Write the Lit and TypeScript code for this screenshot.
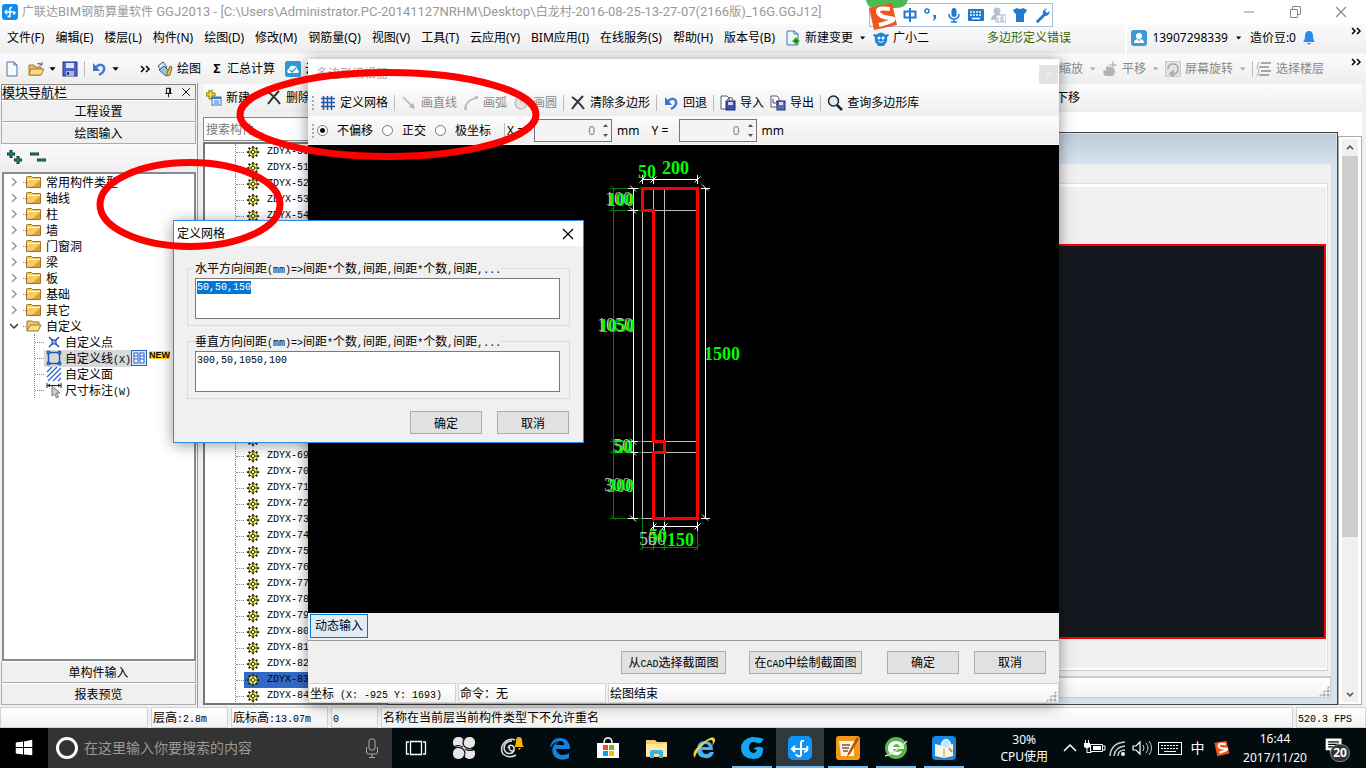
import { LitElement, html, svg, css } from "lit";
import { customElement, query } from "lit/decorators.js";
import { classMap } from "lit/directives/class-map.js";

const ICONS: Record<string, unknown> = {
  app: svg`<rect width="16" height="16" rx="3" fill="#0b8ff0"/><path d="M8 13V5q0-2 2-1.500M3 8h10M3 8l2-2M3 8l2 2M13 8q0 2-2 2M8 13q-2 0-2-1.500" fill="none" stroke="#fff" stroke-width="1.500"/>`,
  file: svg`<path d="M3 1h7l3 3v11H3z" fill="#f4f9ff" stroke="#55739c"/><path d="M10 1v3h3" fill="none" stroke="#55739c"/>`,
  open: svg`<path d="M1 4h5l1 2h6v8H1z" fill="#e9b95a" stroke="#a87a2c"/><path d="M3 8h13l-3 6H1z" fill="#ffd98a" stroke="#a87a2c"/><path d="M9 3q3-2 5 1M14 1v3h-3" fill="none" stroke="#555"/>`,
  save: svg`<rect x="1" y="1" width="14" height="14" fill="#4a62c8" stroke="#27348b"/><rect x="4" y="2" width="8" height="5" fill="#dbe6fb"/><rect x="4" y="10" width="8" height="5" fill="#a9b6d6"/><rect x="5" y="11" width="2" height="3" fill="#27348b"/>`,
  undo: svg`<path d="M4 7q6-6 9-1 1 5-5 8" fill="none" stroke="#4a7bd0" stroke-width="2.500"/><path d="M2 2v8h7z" fill="#3f72cb"/>`,
  down: svg`<path d="M4 6h7l-3.500 4z" fill="currentColor"/>`,
  pencils: svg`<path d="M1 5l5-4 4 5-5 4z" fill="#dfe9f5" stroke="#456"/><path d="M2 9l5-4 6 6-4 4z" fill="#9cc0e4" stroke="#345d8d"/><path d="M10 12l3-7 2 1-2 8-3 1z" fill="#f0c040" stroke="#7a6a20"/>`,
  cloud: svg`<rect width="16" height="16" rx="2" fill="#2e9bd8"/><path d="M3 12q-2-3 1-4 1-4 5-3 3 0 3 3 3 2 1 4z" fill="#fff"/><path d="M5 9l2 2 4-4" fill="none" stroke="#2e9bd8" stroke-width="1.500"/>`,
  add: svg`<path d="M3 0h3v3h3v3H6v3H3V6H0V3h3z" fill="#f2d33c" stroke="#8d7410"/><rect x="6" y="7" width="9" height="8" fill="#e4f0ff" stroke="#3a76c4"/><path d="M6 8h9" stroke="#3a76c4" stroke-width="2"/><path d="M8 11h5M8 13h5" stroke="#3a76c4"/>`,
  cross: svg`<path d="M2 2q6 4 12 12M13 1Q7 7 2 14" fill="none" stroke="#333" stroke-width="2"/>`,
  grid: svg`<path d="M3.500 1v14M7.500 1v14M11.500 1v14M1 3.500h14M1 7.500h14M1 11.500h14" stroke="#2457a8" stroke-width="1.500"/>`,
  line: svg`<path d="M2 2l10 10" stroke="#999" stroke-width="1.500"/><path d="M14 14l-6-2 4-4z" fill="#999"/>`,
  arc: svg`<path d="M2 14Q3 5 13 3" fill="none" stroke="#999" stroke-width="1.500"/><rect x="12" y="1" width="3" height="3" fill="#aaa"/><rect x="1" y="12" width="3" height="3" fill="#aaa"/>`,
  circle: svg`<circle cx="8" cy="8" r="6" fill="#ddd" stroke="#aaa" stroke-width="1.500"/><path d="M8 8V3" stroke="#aaa"/>`,
  disk: svg`<path d="M1 1h6l2 2v11H1z" fill="#fff" stroke="#557"/><rect x="6" y="6" width="9" height="9" fill="#3c50a8" stroke="#222f70"/><rect x="8" y="7" width="5" height="3" fill="#cfdaf5"/><path d="M7 5q4-5 6 0" fill="none" stroke="#444"/>`,
  diskout: svg`<path d="M1 1h6l2 2v9H1z" fill="#fff" stroke="#557"/><rect x="7" y="6" width="8" height="9" fill="#5a6cbc" stroke="#222f70"/><rect x="9" y="7" width="4" height="3" fill="#cfdaf5"/><path d="M3 4v4h5M6 6l2 2-2 2" fill="none" stroke="#444"/>`,
  find: svg`<circle cx="6.500" cy="6" r="5" fill="#d8f0ff" stroke="#222" stroke-width="1.500"/><path d="M10 10l5 5" stroke="#222" stroke-width="2.500"/>`,
  change: svg`<path d="M2 1h7l4 3v11H2z" fill="#eef6ff" stroke="#3a76b8"/><path d="M9 1v3h4" fill="none" stroke="#3a76b8"/><path d="M11 7l4 4-4 4-4-4z" fill="#4db82e"/><path d="M11 9v4M9 11h4" stroke="#1f7a10" stroke-width="1.500"/>`,
  robot: svg`<path d="M0 5q2-2 3 0 5-5 10 0 1-2 3 0-1 2-2 2 1 5-2 7l-1 2H5l-1-2Q1 12 2 7 1 7 0 5z" fill="#1d86d8"/><circle cx="6" cy="8" r="1.500" fill="#fff"/><circle cx="10" cy="8" r="1.500" fill="#fff"/><path d="M5 11q3 3 6 0" stroke="#fff" fill="none"/>`,
  user: svg`<rect width="16" height="16" rx="3" fill="#3f9bd0"/><circle cx="8" cy="6" r="3" fill="#fff"/><path d="M3 13q0-4 5-4t5 4z" fill="#fff"/><path d="M7 9h2l-1 3z" fill="#3f9bd0"/>`,
  bell: svg`<path d="M8 1q4 0 4 5 0 4 2 6H2q2-2 2-6 0-5 4-5z" fill="#2b8af0"/><path d="M6 13h4q-2 3-4 0z" fill="#2b8af0"/>`,
  pan: svg`<path d="M3 15q-3-4-1-6l2 1V6q2-2 3 0 3-1 3 1 3 0 3 3 0 4-3 5z" fill="#999"/><path d="M11 0v8M7 4h8" stroke="#888"/>`,
  rotate: svg`<rect x=".5" y=".5" width="15" height="15" fill="#ddd" stroke="#bbb"/><path d="M3 8q0-5 5-5t5 5-5 5M8 10v5l-3-2z" fill="none" stroke="#888" stroke-width="1.500"/>`,
  floors: svg`<path d="M5 2h10M3 6h10M5 10h10M3 14h10" stroke="#888" stroke-width="2"/><path d="M3 1L1 6l2 4-2 5" fill="none" stroke="#999"/>`,
  plusplus: svg`<path d="M4 0v8M0 4h8M11 6v8M7 10h8" stroke="#0d3d3d" stroke-width="3"/><path d="M4 1v6M1 4h6M11 7v6M8 10h6" stroke="#1c9c8c"/>`,
  minusminus: svg`<path d="M0 4h9M7 10h9" stroke="#0d3d3d" stroke-width="3"/><path d="M1 4h7M8 10h7" stroke="#1c9c8c"/>`,
  folder: svg`<path d="M.5 3.500q0-1 1-1h4l1 1h8v10H.5z" fill="#f3cd69" stroke="#9c7426"/><path d="M1 5.500h13" stroke="#fff3c4"/><path d="M14 6v7H6z" fill="#dd9f33"/>`,
  folderopen: svg`<path d="M1 13V3h5l1 1h6v3" fill="#f3cd69" stroke="#9c7426"/><path d="M1 13l3-6h11l-3 6z" fill="#fbdc8b" stroke="#9c7426"/>`,
  point: svg`<path d="M3 3l10 10M13 3L3 13" stroke="#1f4fa8" stroke-width="1.500"/><rect x="6" y="6" width="4" height="4" fill="#7db5f0" stroke="#1f4fa8"/>`,
  poly: svg`<rect x="2.500" y="2.500" width="11" height="11" fill="none" stroke="#1f57b8" stroke-width="1.500"/><path d="M1 1h3v3H1zM12 1h3v3h-3zM1 12h3v3H1zM12 12h3v3h-3z" fill="#3b7ee0" stroke="#123f8f" stroke-width=".5"/>`,
  face: svg`<path d="M1 6l5-5M1 11L11 1M2 15L15 2M7 15l8-8M12 15l3-3" stroke="#2a63c8" stroke-width="1.200"/>`,
  dim: svg`<path d="M1 1v5M15 1v5M1 3.500h14M4 2L2 3.500 4 5M12 2l2 1.500L12 5" fill="none" stroke="#222"/><path d="M6 4v10l2.500-2 2 4 2-1-2-4H14z" fill="#ccc" stroke="#777"/>`,
  gear: svg`<path d="M8 1v14M1 8h14M3 3l10 10M13 3L3 13" stroke="#222" stroke-width="2"/><circle cx="8" cy="8" r="5" fill="#fff23a" stroke="#222" stroke-dasharray="2 1"/><path d="M8 3v3M8 10v3M3 8h3M10 8h3" stroke="#222"/><circle cx="8" cy="8" r="2" fill="#fff" stroke="#222"/>`,
  columns: svg`<rect x=".5" y=".5" width="15" height="15" fill="#d5e8ff" stroke="#2a63b8"/><rect x="3" y="3" width="4" height="10" fill="#fff" stroke="#2a63c8"/><rect x="9" y="3" width="4" height="10" fill="#fff" stroke="#2a63c8"/><path d="M3 6h4M9 6h4M3 9h4M9 9h4" stroke="#2a63c8"/>`,
  pin: svg`<path d="M5 2h6v7H5zM3 9.500h10M8 10v5M9.500 2v7" fill="none" stroke="#222" stroke-width="1.500"/>`,
  close: svg`<path d="M3 3l10 10M13 3L3 13" stroke="currentColor" stroke-width="1.200"/>`,
  min: svg`<path d="M3 8h10" stroke="#888"/>`,
  restore: svg`<path d="M3.500 5.500h7v8h-7zM5.500 5V2.500h8v8H11" fill="none" stroke="#888"/>`,
  up: svg`<path d="M3 10l5-5 5 5" fill="none" stroke="#555" stroke-width="2.500"/>`,
  dn: svg`<path d="M3 6l5 5 5-5" fill="none" stroke="#555" stroke-width="2.500"/>`,
  more: svg`<path d="M2 5l3 3-3 3M7 5l3 3-3 3" fill="none" stroke="#000" stroke-width="1.500"/>`,
  mic: svg`<rect x="5.500" y="1" width="5" height="9" rx="2.500" fill="#1f7ad0"/><path d="M3 7q0 5 5 5t5-5M8 12v3M5 15h6" fill="none" stroke="#1f7ad0" stroke-width="1.500"/>`,
  kbd: svg`<rect x="0" y="2" width="16" height="12" rx="1" fill="#1f7ad0"/><path d="M2 5h12M2 8h12" stroke="#fff" stroke-width="1.500" stroke-dasharray="2 1"/><path d="M4 11.500h8" stroke="#fff" stroke-width="1.500"/>`,
  person: svg`<circle cx="7" cy="4" r="3.500" fill="#b4bfd2"/><path d="M1 13q0-6 6-6t6 5z" fill="#b4bfd2"/><rect x="6" y="8" width="10" height="7" fill="#fff" stroke="#a8b2c8"/><path d="M8 10v4M11 10h2v4h-2z" stroke="#a8b2c8" fill="none"/>`,
  shirt: svg`<path d="M1 3l4-2q3 2 6 0l4 2-2 4-1-1v9H4V6L3 7z" fill="#1f7ad0"/>`,
  wrench: svg`<path d="M2 14l7-7q-1-4 4-6l-2 3 2 2 3-2q-1 5-5 5l-7 7q-2 0-2-2z" fill="#1f7ad0"/>`,
  comma: svg`<circle cx="3" cy="4" r="2" fill="none" stroke="#1f7ad0" stroke-width="1.500"/><path d="M9 8h3q1 4-3 6l1-3z" fill="#1f7ad0"/>`,
  zhong: svg`<path d="M2.500 4.500h11v6h-11zM8 1v14" fill="none" stroke="#1f7ad0" stroke-width="2"/>`,
};

const TASK: Record<string, unknown> = {
  win: svg`<path d="M3 6l8-1v6H3zM12 5l9-2v8h-9zM3 12h8v7l-8-1zM12 12h9v8l-9-1z" fill="#fff"/>`,
  view: svg`<path d="M6.500 5.500h11v13h-11zM5 6H2.500v12H5M19 6h2.500v12H19" fill="none" stroke="#fff" stroke-width="1.300"/>`,
  fan: svg`<rect x="1" y="1" width="11" height="11" rx="5" fill="#e6e6e6"/><rect x="12" y="1" width="11" height="11" rx="5" fill="#e6e6e6"/><rect x="1" y="12" width="11" height="11" rx="5" fill="#e6e6e6"/><rect x="12" y="12" width="11" height="11" rx="5" fill="#e6e6e6"/><circle cx="12" cy="12" r="5" fill="#e6e6e6"/><path d="M13 1q-4 6 0 10 5 3 10 1M11 23q4-6 0-10-5-3-10-1M1 11q5-3 10 0M23 13q-5 3-10 0" stroke="#111" fill="none" stroke-width="1.200"/>`,
  swirl: svg`<path d="M8 12q1-4 5-2 3 4-1 7-6 2-8-4Q4 5 12 5M14 13q0 2-2 2-4-1-2-4M16 19Q9 23 3 18-1 11 6 5q5-3 9-1" fill="none" stroke="#ddd" stroke-width="1.500"/><path d="M14 11q2-2 2-6 0-4 3-4t3 4q0 4 2 6z" fill="#f5b60a"/><path d="M18 12h3l-1.500 2z" fill="#f5b60a"/>`,
  edge: svg`<path d="M2 11Q4 1 13 2q9 1 9 11H8q1 6 7 6 4 0 6-2v5q-8 4-14-1-5-5-1-12 2-3 5-4-3 2-3 4h8q0-4-4-4-6 0-9 6z" fill="#1380dd"/>`,
  store: svg`<path d="M1 7h22v15H1z" fill="#fff"/><path d="M8 7q0-5 4-5t4 5" fill="none" stroke="#fff" stroke-width="1.500"/><path d="M7 9h5v5H7z" fill="#f25022"/><path d="M13 9h5v5h-5z" fill="#7fba00"/><path d="M7 15h5v5H7z" fill="#00a4ef"/><path d="M13 15h5v5h-5z" fill="#ffb900"/>`,
  explorer: svg`<path d="M2 4h9l2 2h10v15H2z" fill="#f7cf64"/><path d="M2 8h21v12H2z" fill="#ffe9a2"/><path d="M6 22v-6q0-2 2-2h9q2 0 2 2v6h-4v-4h-5v4z" fill="#35b5e9"/>`,
  ie: svg`<path d="M5 14q0-9 8-9 8 0 8 9H10q1 4 4 4 3 0 4-2h4q-2 7-9 6-8-1-8-8zm5-3h7q-1-3-3-3-3 0-4 3z" fill="#4ab5f1"/><path d="M3 22q-5-5 6-14T22 2q3 2-2 8 2-6-1-6-4 0-10 7T3 22z" fill="#f6cf3e"/>`,
  g: svg`<path d="M12 1q7 0 12 2-2 1-2 3-2 2-5 1-7-3-8 4 0 5 4 6 3 0 4-3-2-1-4-1 5-4 10-1 1 10-8 11Q2 23 1 13 1 3 12 1z" fill="#16a5f0"/>`,
  ggj: svg`<rect width="24" height="24" rx="5" fill="#0d94f5"/><path d="M13 20V7q0-3 3-2M4 13h15M7 10l-3 3 3 3M19 10q2 5-3 6M13 20q-4 1-5-2" fill="none" stroke="#fff" stroke-width="2"/>`,
  note: svg`<rect width="24" height="24" rx="3" fill="#f09a18"/><path d="M3 5h15v15H5z" fill="#fff4d8"/><path d="M6 9h8M6 12h7M7 15h5" stroke="#754" stroke-width="1.300"/><path d="M21 1L12 17l-1 4 3-3 9-15z" fill="#b3501c"/>`,
  e360: svg`<circle cx="12" cy="12" r="11" fill="#58b947"/><path d="M4 13q0-8 8-8 8 0 8 8H9q1 3 4 3l5-1q-2 5-7 4-7-1-7-6zm5-2h7q-1-3-3-3-3 0-4 3z" fill="#fff"/><path d="M1 20Q10 18 23 5" stroke="#c6ecb8" fill="none" stroke-width="1.500"/>`,
  book: svg`<rect width="24" height="24" rx="4" fill="#1787e0"/><path d="M3 8l9 2 9-2v12l-9 2-9-2z" fill="#fbf4e2"/><path d="M12 10v11" stroke="#c79a50"/><circle cx="14" cy="8" r="4.500" fill="#bfe5ff" stroke="#fff"/><path d="M17 12l3 4" stroke="#d88b2c" stroke-width="2"/>`,
  chev: svg`<path d="M6 15l6-6 6 6" fill="none" stroke="#fff" stroke-width="1.500"/>`,
  battery: svg`<path d="M8.500 8.500h12v7h-12zM21 10h2v4h-2" fill="none" stroke="#fff"/><path d="M11 10h8v4h-8zM2 7h6v4l-2 1H4l-2-1zM3 4h1v3H3zM6 4h1v3H6zM4.500 12h1v4h4v1h-5z" fill="#fff"/>`,
  wifi: svg`<path d="M4 20Q5 7 19 6M8 20q1-9 11-10M12 20q0-6 7-6" fill="none" stroke="#ccc" stroke-width="1.500"/><circle cx="17" cy="18" r="2" fill="#fff"/>`,
  vol: svg`<path d="M3 10h3l4-4v12l-4-4H3z" fill="none" stroke="#fff" stroke-width="1.200"/><path d="M13 9q2 3 0 6M16 7q4 5 0 10M19 5q5 7 0 14" fill="none" stroke="#ccc"/>`,
  tkbd: svg`<rect x=".5" y="6.500" width="23" height="12" fill="none" stroke="#fff"/><path d="M3 9.500h18M3 12.500h18" stroke="#fff" stroke-dasharray="2 1"/><path d="M6 15.500h12" stroke="#fff"/>`,
  sogou: svg`<path d="M2 4l17-3 4 18-17 4z" fill="#f1541c"/><path d="M18 6Q8 4 8 8t9 4-8 6" stroke="#fff" stroke-width="3" fill="none"/>`,
  notif: svg`<path d="M2 3h19v14H10l-3 4v-4H2z" fill="#fff"/><path d="M5 7h13M5 10h13M5 13h9" stroke="#000" stroke-width="1.300"/>`,
  micro: svg`<rect x="9" y="3" width="6" height="11" rx="2" fill="none" stroke="#aaa"/><path d="M6.500 11v5q0 2 2 2h7q2 0 2-2v-5M12 18v3M9 21.500h6" fill="none" stroke="#aaa"/>`,
};

const icon = (name: string, size = 16) => html`<svg class="ic" width=${size} height=${size} viewBox="0 0 16 16" aria-hidden="true">${ICONS[name]}</svg>`;
const task = (name: string, size = 24) => html`<svg class="ic" width=${size} height=${size} viewBox="0 0 24 24" aria-hidden="true">${TASK[name]}</svg>`;

/** Wraps the Latin runs of a Chinese text, so that they can have a face of their own. */
const latin = (text: string, face: string) =>
  text.split(/([\x20-\x7e]+)/).filter(Boolean).map((part) =>
    /^[\x20-\x7e]/.test(part) ? html`<span class=${face}>${part}</span>` : part);
const half = (text: string) => latin(text, "half");

const TITLE = "广联达BIM钢筋算量软件 GGJ2013 - [C:\\Users\\Administrator.PC-20141127NRHM\\Desktop\\白龙村-2016-08-25-13-27-07(2166版)_16G.GGJ12]";
const MENUS = ["文件(F)", "编辑(E)", "楼层(L)", "构件(N)", "绘图(D)", "修改(M)", "钢筋量(Q)", "视图(V)", "工具(T)", "云应用(Y)", "BIM应用(I)", "在线服务(S)", "帮助(H)", "版本号(B)"];
const TYPES = ["常用构件类型", "轴线", "柱", "墙", "门窗洞", "梁", "板", "基础", "其它"];
const CUSTOM = [
  { icon: "point", label: "自定义点" },
  { icon: "poly", label: "自定义线(X)", current: true },
  { icon: "face", label: "自定义面" },
  { icon: "dim", label: "尺寸标注(W)" },
];
const MEMBERS = Array.from({ length: 35 }, (_, i) => `ZDYX-${50 + i}`);

const XS = [642.5, 653.5, 664.5, 697.5];
const YS = [188.5, 210.5, 441.5, 452.5, 518.5];
const tick = (x: number, y: number) => svg`<path d="M${x - 3} ${y + 3}l6-6"/>`;

@customElement("app-root")
export class AppRoot extends LitElement {
  @query("#horizontal") private horizontal!: HTMLTextAreaElement;

  static styles = css`
    :host { display: flex; flex-direction: column; height: 100vh; position: relative; overflow: hidden; background: #f0f0f0;
      color: #000; font: 12px/16px "Noto Sans", "Noto Sans CJK SC", sans-serif; }
    * { box-sizing: border-box; }
    button, input, textarea { font: inherit; color: inherit; margin: 0; padding: 0; border: 0; background: none; border-radius: 0; }
    button { white-space: nowrap; }
    .ic { flex: none; display: block; }
    .sim { font-family: "Noto Sans CJK SC", sans-serif; }
    .half { font-family: "Liberation Mono", monospace; font-size: 10px; line-height: 12px; white-space: pre; }
    .wide { font-family: Roboto, sans-serif; font-size: 13px; }
    .row { display: flex; align-items: center; }
    .grow { flex: 1; min-width: 0; }
    .bar { background: linear-gradient(#fbfbfb, #eee); }
    .titlebar { height: 23px; background: #fff; color: #999; padding: 0 17px 0 2px; gap: 4px; white-space: nowrap; }
    .controls { margin-left: auto; display: flex; gap: 30px; color: #888; }
    .menubar { height: 30px; }
    .menus { gap: 11px; padding-left: 7px; }
    .tool { display: flex; align-items: center; gap: 4px; }
    .off { color: #888; }
    .off .ic { opacity: .7; }
    .menubar .extra { gap: 4px; margin-left: 10px; }
    .notice { color: #336600; margin-left: 58px; }
    .account { margin-left: auto; height: 30px; gap: 5px; border-left: 2px solid #fff; padding-left: 4px; }
    .more { align-self: flex-start; flex: none; }
    .account .more { margin-left: 28px; }
    .toolbar { height: 30px; padding: 0 0 0 4px; border-top: 1px solid #f8f8f8; }
    .sep { width: 1px; height: 16px; background: #bbb; flex: none; margin: 0 6px; }
    .std > .ic { margin: 0 2px; }
    .std .file { margin-right: 8px; }
    .std .more { margin: 0 0 0 14px; }
    .main { gap: 10px; padding-left: 2px; }
    .main b { width: 12px; }
    .view { margin-left: auto; gap: 3px; padding-right: 26px; }
    .view .sep { margin: 0; }
    .body { flex: 1; display: flex; min-height: 0; }

    .nav { width: 198px; display: flex; flex-direction: column; border-right: 1px solid #999; flex: none; padding: 1px 1px 2px 1px; }
    .nav header { height: 16px; border: 1px solid #888; display: flex; align-items: center; padding: 0; }
    .nav header span { margin-right: auto; font-size: 13px; line-height: 14px; }
    .nav header button { width: 18px; display: grid; place-items: center; }
    .section { height: 22px; border: 1px solid #aaa; border-top-color: #fff; background: #f0f0f0; line-height: 20px; flex: none; }
    .expand { height: 28px; gap: 7px; padding: 0 6px; }
    .tree { flex: 1; background: #fff; border: 2px solid #858a91; margin-left: 1px; padding: 0 0 0 6px; min-height: 0; }
    .tree ul, .members ul { list-style: none; margin: 0; padding: 0; }
    .node { display: flex; align-items: center; height: 16px; white-space: nowrap; }
    .caret { width: 8px; height: 8px; margin-right: 5px; flex: none; }
    .dots { border-top: 1px dotted #888; flex: none; }
    .node .dots { width: 3px; }
    .node b { font-weight: normal; margin-left: 4px; }
    .tree .kids { margin-left: 24px; border-left: 1px dotted #888; }
    .kids .dots { width: 9px; }
    .kids b { margin: 0 0 0 3px; }
    .kids .pick { display: flex; align-items: center; padding-left: 2px; }
    .current { background: #d9d9d9; }
    .new { color: #111; background: #ffd91c; font: bold 9px/8px "Liberation Sans", sans-serif; margin: 0 0 6px 2px; }

    .work { flex: 1; min-width: 0; display: flex; flex-direction: column; padding: 1px 4px 2px 5px; }
    .worktools { height: 28px; padding: 0 3px; gap: 4px; }
    .worktools .del { margin-left: 12px; }
    .worktools .move { margin-left: auto; margin-right: 279px; }
    .split { flex: 1; display: flex; min-height: 0; background: #fff; }
    .members { width: 184px; display: flex; flex-direction: column; background: #f0f0f0; flex: none; gap: 1px; }
    .members input { height: 24px; margin-top: 5px; border: 1px solid #888; background: #fff; padding: 0 2px; }
    .members input::placeholder { color: #777; opacity: 1; }
    .members ul { flex: 1; min-height: 0; border: 2px solid #777; background: #fff; padding-left: 30px; overflow: hidden; }
    .members li { height: 16px; display: flex; align-items: center; border-left: 1px dotted #888; }
    .members .dots { width: 8px; }
    .members .name { display: flex; align-items: center; gap: 7px; flex: 1; height: 16px; padding-left: 2px; }
    .selected { background: #316ac5; }
    .mdi { flex: 1; min-width: 0; display: flex; margin-top: 20px; }
    .child { flex: 1; min-width: 0; border: 1px solid #444; display: flex; flex-direction: column; background: #d6e3ef; padding: 0 6px 6px; }
    .child .cap { height: 30px; margin: 1px -5px 0; background: linear-gradient(#bccbda, #d6e3ef); }
    .panel { flex: 1; display: flex; flex-direction: column; background: #f0f0f0; padding: 19px 3px 5px 0; border-bottom: 1px solid #ccc; }
    .frame { flex: 1; border: 1px solid #ddd; border-bottom-color: #ccc; box-shadow: inset -1px 3px #fff, inset 0 -2px #fff; display: flex; padding: 60px 1px 31px 0; }
    .model { flex: 1; background: #15191f; border: 2px solid red; }
    .childstatus { height: 21px; background: linear-gradient(#fefefe, #f3f3f3); border: 1px solid #ccc; display: flex; justify-content: flex-end; align-items: flex-end; }
    .scroll { width: 24px; border: 1px solid #aaa; margin-top: 4px; padding: 2px 3px; background: #fff; display: flex; flex-direction: column; align-items: center; }
    .scroll button { width: 16px; height: 17px; background: #f0f0f0; display: grid; place-items: center; }
    .track { flex: 1; width: 16px; background: #f0f0f0; }
    .thumb { height: 72%; background: #cdcdcd; }
    .grip { background: radial-gradient(circle, #aaa 1px, transparent 2px) 0 0 / 4px 4px; width: 12px; height: 12px; clip-path: polygon(100% 0, 100% 100%, 0 100%); }

    .status { display: flex; gap: 3px; height: 21px; flex: none; }
    .status span.cell { border: 1px solid #d2d2d2; background: linear-gradient(#fff, #f2f2f2); padding: 0 1px; line-height: 18px; white-space: nowrap; }
    .w47 { width: 47px; } .w70 { width: 70px; } .w77 { width: 77px; } .w97 { width: 97px; } .w147 { width: 148px; }

    .taskbar { height: 40px; flex: none; background: #020b0e; color: #fff; display: flex; }
    .start { width: 48px; background: #000; display: grid; place-items: center; }
    .search { width: 344px; background: #333; display: flex; align-items: center; padding: 0 8px; gap: 6px; }
    .ring { width: 22px; height: 22px; border: 3px solid #fff; border-radius: 50%; flex: none; }
    .search input { flex: 1; font-size: 14px; min-width: 0; }
    .search input::placeholder { color: #999; opacity: 1; }
    .apps { display: flex; }
    .apps button { width: 48px; display: grid; place-items: center; border-bottom: 2px solid transparent; padding-top: 2px; }
    .apps .run { border-image: linear-gradient(90deg, transparent 5px, #76b9ed 5px 43px, transparent 43px) 1; border-width: 0 0 2px; }
    .apps .active { background: #31393c; border-bottom-color: #76b9ed; }
    .tray { margin-left: auto; display: flex; align-items: center; }
    .cpu, .clock { text-align: center; line-height: 17px; }
    .cpu { margin-right: 10px; }
    .clock { width: 68px; margin-left: 11px; line-height: 19px; }
    .keys { margin-left: 4px; }
    .cn { width: 31px; text-align: center; font-size: 14px; }
    .center { position: relative; margin: 0 18px 0 15px; width: 24px; height: 24px; }
    .count { position: absolute; left: 6px; top: 8px; width: 20px; height: 18px; border-radius: 9px; background: #333; border: 1px solid #888; font: bold 12px/15px "Noto Sans", sans-serif; text-align: center; }

    .window { position: absolute; display: flex; flex-direction: column; background: #f0f0f0; }
    .editor { left: 308px; top: 59px; width: 751px; bottom: 65px; box-shadow: 0 2px 14px rgba(0,0,0,.45); }
    .editor > header { height: 30px; background: #fff; color: #aaa; display: flex; align-items: center; padding: 0 1px 0 8px; justify-content: space-between; }
    .editor > header button { width: 19px; height: 19px; background: #e3e3e3; color: #fff; display: grid; place-items: center; }
    .strip { height: 28px; padding: 0 4px; flex: none; border-bottom: 1px solid #f8f8f8; }
    .handle { width: 2px; height: 14px; border-left: 2px dotted #aaa; margin-right: 3px; flex: none; }
    .draw { gap: 6px; }
    .draw .tool { gap: 4px; }
    .draw .sep { margin: 0; }
    .draw .handle { margin-right: 0; }
    .offset label { display: flex; align-items: center; }
    .offset input[type="radio"] { appearance: none; width: 11px; height: 11px; border: 1px solid #777; border-radius: 50%; background: #fff; margin: 0 9px 0 0; }
    .offset input[type="radio"]:checked { background: radial-gradient(circle, #111 2px, #fff 3px); }
    .offset .sep { margin: 0 2px 0 13px; }
    .radios { gap: 9px; }
    .num { width: 78px; height: 23px; border: 1px solid #767676; margin: 0 5px; display: flex; align-items: center; background: #f4f4f4; color: #888; }
    .num input { width: 60px; text-align: right; appearance: textfield; }
    .num input::-webkit-inner-spin-button { display: none; }
    .num svg { margin-left: 6px; }
    .label { width: 22px; }
    .offset .second { margin-left: 12px; }
    .canvas { flex: 1; min-height: 0; background: #000; display: block; width: 100%; }
    .canvas text { font-family: "Liberation Serif", serif; font-size: 18px; }
    .canvas .dimtext { fill: #0f0; font-weight: bold; }
    .canvas .axis { fill: #bbb; }
    .dynamic { height: 28px; border-bottom: 1px solid #999; padding: 1px 2px; flex: none; }
    .dynamic button { height: 24px; width: 58px; border: 1px solid #0078d7; background: #e0edf7; }
    .choices { height: 42px; flex: none; display: flex; justify-content: flex-end; align-items: center; padding-right: 13px; }
    .push { height: 23px; width: 72px; background: #e1e1e1; border: 1px solid #adadad; line-height: 20px; }
    .cad1 { width: 105px; margin-right: 23px; }
    .cad2 { width: 113px; margin-right: 25px; }
    .gap15 { margin-right: 15px; }
    .edstatus { height: 20px; gap: 2px; }
    .edstatus .last { display: flex; align-items: flex-end; justify-content: space-between; }

    .define { left: 173px; top: 220px; width: 411px; border: 1px solid #2b8cec; box-shadow: 0 2px 14px rgba(0,0,0,.4); padding-bottom: 8px; }
    .define > header { height: 25px; background: #fff; display: flex; align-items: center; justify-content: space-between; padding: 0 7px 0 3px; }
    .define form { padding: 14px 13px 0 13px; display: flex; flex-direction: column; }
    fieldset { margin: 0 0 7px; padding: 2px 9px 6px 7px; border: 1px solid #dcdcdc; min-width: 0; }
    legend { padding: 0; height: 16px; line-height: 16px; white-space: nowrap; }
    textarea { display: block; width: 100%; height: 41px; resize: none; background: #fff; border: 1px solid #7a7a7a; padding: 2px 1px; font: 10px/13px "Liberation Mono", monospace; outline: 0; overflow: hidden; }
    textarea::selection { background: #0078d7; color: #fff; }
    .answers { display: flex; justify-content: flex-end; gap: 15px; padding: 5px 1px 0 0; }

    .ime { position: absolute; left: 869px; top: 3px; height: 24px; width: 184px; background: #fff; border: 1px solid #a9bfd5; display: flex; align-items: center; gap: 6px; padding: 0 4px 0 32px; }
    .ime button { display: block; }
    .leaf { position: absolute; left: -6px; top: -4px; }
    .marks { position: absolute; inset: 0; width: 100%; height: 100%; pointer-events: none; fill: none; stroke: red; stroke-width: 7; }
  `;

  firstUpdated() {
    this.horizontal.focus();
    this.horizontal.select();
  }

  private tool(name: string, label: string, off = false, drop = false) {
    return html`<button class=${classMap({ tool: true, off })} ?disabled=${off}>${icon(name)}<span>${label}</span>${drop ? icon("down", 12) : ""}</button>`;
  }

  private more() {
    return html`<button class="more" aria-label="更多">${icon("more", 16)}</button>`;
  }

  private renderTop() {
    return html`
      <header class="titlebar row">
        ${icon("app")}<span>${latin(TITLE, "wide")}</span>
        <div class="controls"><button aria-label="最小化">${icon("min")}</button><button aria-label="还原">${icon("restore")}</button><button aria-label="关闭">${icon("close")}</button></div>
      </header>
      <nav class="menubar bar row">
        <div class="menus row">${MENUS.map((m) => html`<button>${m}</button>`)}</div>
        <div class="extra row">${this.tool("change", "新建变更", false, true)}${this.tool("robot", "广小二")}</div>
        <span class="notice">多边形定义错误</span>
        <div class="account row">
          ${icon("user")}<span>13907298339</span>${icon("down", 12)}<span>造价豆:0</span>${icon("bell")}${this.more()}
        </div>
      </nav>
      <div class="toolbar bar row">
        <div class="std row">
          <button class="file" aria-label="新建">${icon("file")}</button><button aria-label="打开">${icon("open")}</button>${icon("down", 14)}
          <button aria-label="保存">${icon("save")}</button><i class="sep"></i>
          <button aria-label="撤销">${icon("undo")}</button>${icon("down", 14)}
          ${this.more()}
        </div>
        <div class="main row">
          ${this.tool("pencils", "绘图")}<button class="tool"><b>Σ</b>汇总计算</button>${this.tool("cloud", "云检查")}
        </div>
        <div class="view row">
          ${this.tool("find", "缩放", true, true)}${this.tool("pan", "平移", true, true)}${this.tool("rotate", "屏幕旋转", true, true)}
          <i class="sep"></i>${this.tool("floors", "选择楼层", true)}
        </div>
        ${this.more()}
      </div>`;
  }

  private renderNav() {
    return html`<aside class="nav sim">
      <header><span>模块导航栏</span><button aria-label="固定">${icon("pin", 11)}</button><button aria-label="关闭">${icon("close", 12)}</button></header>
      <button class="section">工程设置</button><button class="section">绘图输入</button>
      <div class="expand bar row"><button aria-label="全部展开">${icon("plusplus")}</button><button aria-label="全部折叠">${icon("minusminus")}</button></div>
      <div class="tree"><ul>
        ${TYPES.map((t) => html`<li class="node"><svg class="caret" viewBox="0 0 8 8"><path d="M2 0l4 4-4 4" fill="none" stroke="#999" stroke-width="1.500"/></svg><i class="dots"></i>${icon("folder")}<b>${t}</b></li>`)}
        <li><div class="node"><svg class="caret" viewBox="0 0 8 8"><path d="M0 2l4 4 4-4" fill="none" stroke="#333" stroke-width="1.500"/></svg><i class="dots"></i>${icon("folderopen")}<b>自定义</b></div>
          <ul class="kids">${CUSTOM.map((c) => html`<li class="node"><i class="dots"></i><span class=${classMap({ pick: true, current: !!c.current })}>${icon(c.icon)}<b>${half(c.label)}</b></span>${c.current ? html`${icon("columns")}<span class="new">NEW</span>` : ""}</li>`)}</ul></li>
      </ul></div>
      <button class="section">单构件输入</button><button class="section">报表预览</button>
    </aside>`;
  }

  private renderWork() {
    return html`<main class="work">
      <div class="worktools bar row">${this.tool("add", "新建")}<span class="del">${this.tool("cross", "删除")}</span><button class="move">下移</button></div>
      <div class="split">
        <section class="members">
          <input type="search" aria-label="搜索构件" placeholder="搜索构件...">
          <ul>${MEMBERS.map((m) => html`<li><i class="dots"></i><span class=${classMap({ name: true, selected: m === "ZDYX-83" })}>${icon("gear", 14)}<span class="half">${m}</span></span></li>`)}</ul>
        </section>
        <div class="mdi">
          <section class="child"><div class="cap"></div><div class="panel"><div class="frame"><div class="model"></div></div></div><div class="childstatus"><i class="grip"></i></div></section>
          <div class="scroll"><button aria-label="向上">${icon("up", 10)}</button><div class="track"><div class="thumb"></div></div><button aria-label="向下">${icon("dn", 10)}</button></div>
        </div>
      </div>
    </main>`;
  }

  private renderDrawing() {
    return html`<svg class="canvas" viewBox="308 145 751 468" role="img" aria-label="截面图">
      <g stroke="#bbb">${XS.slice(0, 3).map((x) => svg`<path d="M${x} 188V518"/>`)}${YS.slice(1).map((y) => svg`<path d="M642 ${y}H697"/>`)}</g>
      <g stroke="#008000" fill="none"><path d="M613.500 188V518M642 547.500H698"/>
        ${YS.map((y) => svg`<path d="M610 ${y}H642M611 ${y - 3}l5 5"/>`)}${XS.map((x) => svg`<path d="M${x} 519V550M${x - 3} 550l6-6"/>`)}</g>
      <g class="axis"><text x="605" y="205">100</text><text x="597" y="331">1050</text><text x="613" y="452">50</text><text x="604" y="491">300</text>
        <text x="639" y="545">50</text><text x="648" y="545">50</text></g>
      <g stroke="#fff" fill="none"><path d="M633.500 188V518M705.500 188V518M642 179.500H698M653 526.500H698"/>
        ${YS.map((y) => svg`<path d="M628 ${y}H638M630 ${y - 3}l6 6"/>`)}
        ${[188.5, 518.5].map((y) => svg`<path d="M701 ${y}H710M702 ${y - 4}l6 6"/>`)}
        ${[642.5, 653.5, 697.5].map((x) => svg`<path d="M${x} 175V184"/>${tick(x, 179.5)}`)}
        ${XS.slice(1).map((x) => svg`<path d="M${x} 522V531"/>${tick(x, 526.5)}`)}</g>
      <path d="M642.500 188.500H697.500V518.500H653.500V452.500H664.500V441.500H653.500V210.500H642.500Z" fill="none" stroke="red" stroke-width="3"/>
      <g class="dimtext"><text x="638" y="178">50</text><text x="662" y="174">200</text><text x="607" y="206">100</text><text x="599" y="332">1050</text><text x="704" y="360">1500</text>
        <text x="615" y="453">50</text><text x="607" y="492">300</text><text x="649" y="542">50</text><text x="667" y="546">150</text></g>
    </svg>`;
  }

  private spin(id: string) {
    return html`<span class="num"><input id=${id} type="number" value="0" disabled><svg width="9" height="17" viewBox="0 0 9 17"><path d="M2 5l2.500-3L7 5zM2 12l2.500 3L7 12z" fill="#555"/></svg></span>`;
  }

  private renderEditor() {
    return html`<section class="window editor" role="dialog" aria-label="多边形编辑器">
      <header><span>多边形编辑器</span><button aria-label="关闭">${icon("close", 9)}</button></header>
      <div class="strip bar row draw"><i class="handle"></i>${this.tool("grid", "定义网格")}<i class="sep"></i>${this.tool("line", "画直线", true)}${this.tool("arc", "画弧", true)}${this.tool("circle", "画圆", true)}<i class="sep"></i>
        ${this.tool("cross", "清除多边形")}<i class="sep"></i>${this.tool("undo", "回退")}<i class="sep"></i>${this.tool("disk", "导入")}${this.tool("diskout", "导出")}<i class="sep"></i>${this.tool("find", "查询多边形库")}</div>
      <div class="strip bar row offset"><i class="handle"></i>
        <div class="radios row"><label><input type="radio" name="offset" checked>不偏移</label><label><input type="radio" name="offset">正交</label><label><input type="radio" name="offset">极坐标</label></div>
        <i class="sep"></i><label class="label" for="dx">X =</label>${this.spin("dx")}<span>mm</span><label class="label second" for="dy">Y =</label>${this.spin("dy")}<span>mm</span></div>
      ${this.renderDrawing()}
      <div class="dynamic"><button>动态输入</button></div>
      <div class="choices sim"><button class="push cad1">${half("从CAD选择截面图")}</button><button class="push cad2">${half("在CAD中绘制截面图")}</button><button class="push gap15">确定</button><button class="push">取消</button></div>
      <footer class="status edstatus sim"><span class="cell w147">${half("坐标 (X: -925 Y: 1693)")}</span><span class="cell w147">命令：无</span><span class="cell grow last">绘图结束<i class="grip"></i></span></footer>
    </section>`;
  }

  private renderDefine() {
    const rest = "方向间距(mm)=>间距*个数,间距,间距*个数,间距,...";
    return html`<section class="window define" role="dialog" aria-label="定义网格">
      <header><span>定义网格</span><button aria-label="关闭">${icon("close")}</button></header>
      <form class="sim">
        <fieldset><legend><label for="horizontal">${half("水平" + rest)}</label></legend><textarea id="horizontal" spellcheck="false" .value=${"50,50,150"}></textarea></fieldset>
        <fieldset><legend><label for="vertical">${half("垂直" + rest)}</label></legend><textarea id="vertical" spellcheck="false" .value=${"300,50,1050,100"}></textarea></fieldset>
        <div class="answers"><button type="button" class="push">确定</button><button type="button" class="push">取消</button></div>
      </form>
    </section>`;
  }

  private renderTaskbar() {
    const apps: [string, string][] = [["view", ""], ["fan", ""], ["swirl", ""], ["edge", ""], ["store", ""], ["explorer", ""], ["ie", ""], ["g", "run"], ["ggj", "active"], ["note", "run"], ["e360", "run"], ["book", "run"]];
    return html`<footer class="taskbar">
      <button class="start" aria-label="开始">${task("win", 22)}</button>
      <label class="search"><i class="ring"></i><input type="text" aria-label="搜索" placeholder="在这里输入你要搜索的内容">${task("micro")}</label>
      <div class="apps">${apps.map(([n, c]) => html`<button class=${c} aria-label=${n}>${task(n)}</button>`)}</div>
      <div class="tray"><div class="cpu">30%<br>CPU使用</div>${task("chev")}${task("battery")}${task("wifi")}${task("vol")}<span class="keys">${task("tkbd")}</span><span class="cn">中</span>${task("sogou", 17)}
        <div class="clock">16:44<br>2017/11/20</div><div class="center">${task("notif", 20)}<span class="count">20</span></div></div>
    </footer>`;
  }

  render() {
    return html`
      ${this.renderTop()}
      <div class="body">${this.renderNav()}${this.renderWork()}</div>
      <footer class="status sim"><span class="cell w147"></span><span class="cell w77">${half("层高:2.8m")}</span><span class="cell w97">${half("底标高:13.07m")}</span><span class="cell w47">${half("0")}</span><span class="cell grow">名称在当前层当前构件类型下不允许重名</span><span class="cell w70">${half("520.3 FPS")}</span></footer>
      ${this.renderTaskbar()}
      ${this.renderEditor()}
      ${this.renderDefine()}
      <div class="ime"><svg class="leaf" width="46" height="32" viewBox="0 0 46 32"><path d="M2 0h42q-2 8-12 8H8Q3 6 2 0z" fill="#4cba55"/><path d="M5 8l23-5 5 22-23 5z" fill="#f1541c"/><path d="M26 9Q13 7 14 12t12 6-11 7" fill="none" stroke="#fff" stroke-width="4"/></svg>
        ${["zhong", "comma", "mic", "kbd", "person", "shirt", "wrench"].map((n) => html`<button aria-label=${n}>${icon(n)}</button>`)}</div>
      <svg class="marks" aria-hidden="true"><ellipse cx="388" cy="114.500" rx="148" ry="42"/><ellipse cx="190" cy="204.500" rx="90" ry="42"/></svg>
    `;
  }
}
